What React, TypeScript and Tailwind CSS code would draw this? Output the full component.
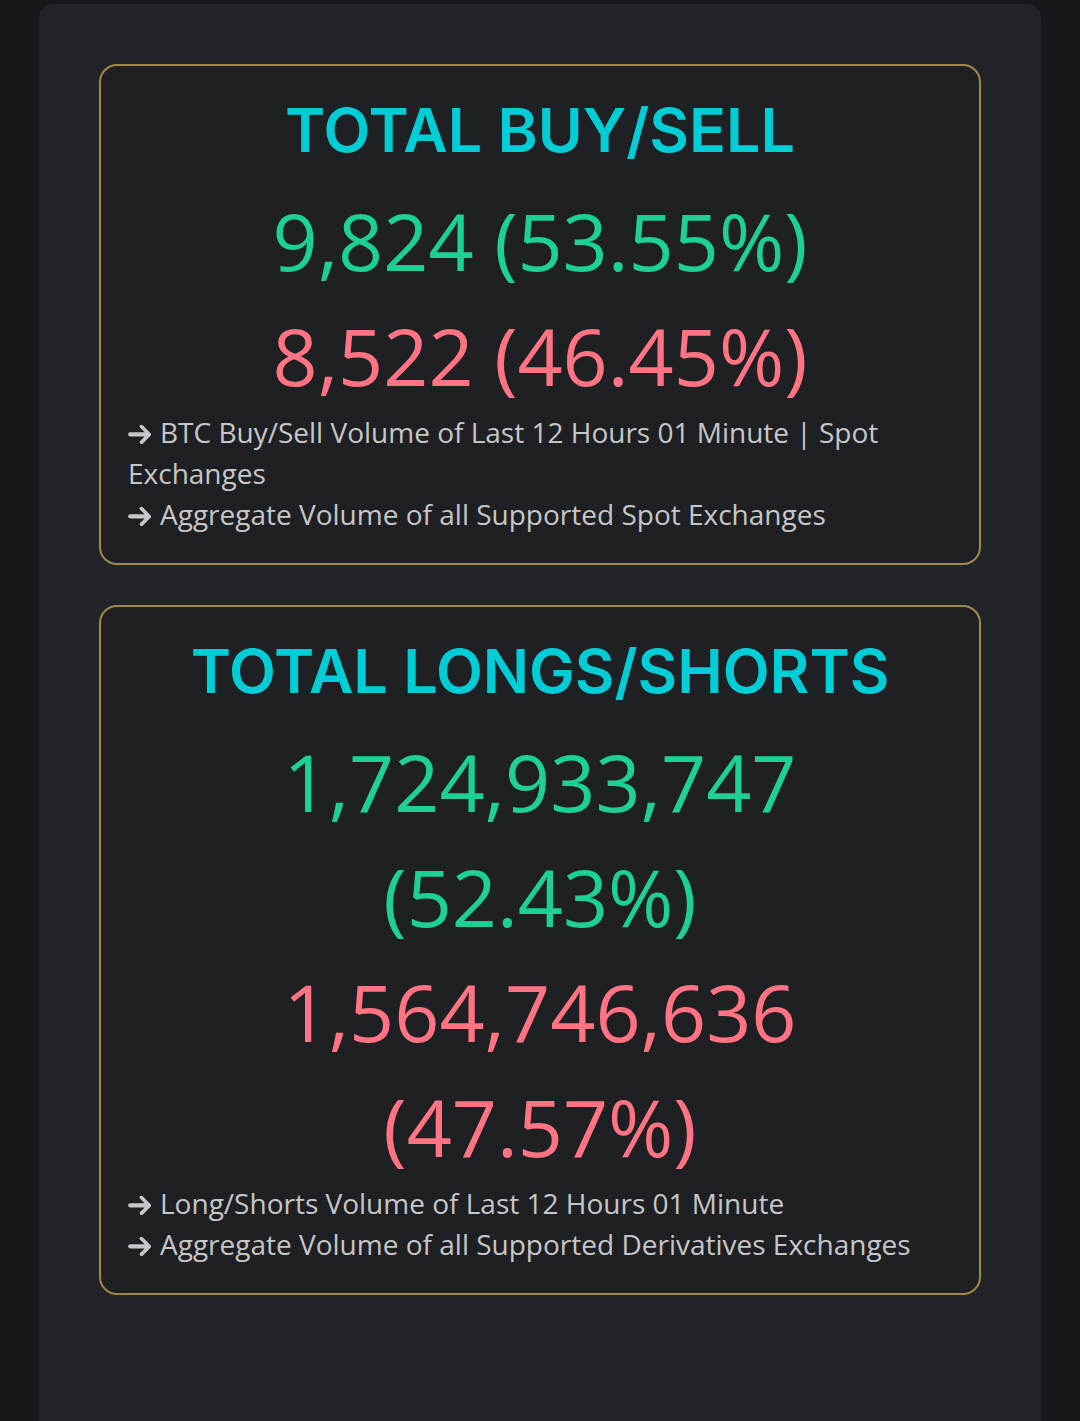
import React from 'react'

interface StatCardProps {
  title: string
  buy: string[]
  sell: string[]
  notes: string[]
}

// thick solid arrow, like the old font-awesome arrow-right
const Arrow = () => (
  <svg viewBox="0 0 24 22" className="inline-block w-[23px] h-[21px] align-[-2px] mr-[9px]" fill="currentColor">
    <path d="M12.6 1.4a2 2 0 0 1 2.8 0l8.2 8.2a2 2 0 0 1 0 2.8l-8.2 8.2a2 2 0 0 1-2.8-2.8l4.8-4.8H2.2a2.2 2.2 0 0 1 0-4.4h15.2l-4.8-4.8a2 2 0 0 1 0-2.8z" />
  </svg>
)

const StatCard: React.FC<StatCardProps> = ({ title, buy, sell, notes }) => {
  return (
    <section className="rounded-[18px] border-2 border-[#9f8848] bg-[#1f2024] px-[27px] pt-[26px] pb-[28px]">
      <h2 className="text-center text-[61px] leading-[76px] font-semibold text-[#00cdd6] font-['Inter',sans-serif]">
        {title}
      </h2>

      <div className="mt-[15px] text-center font-['Open_Sans',sans-serif] text-[79px] leading-[115px]">
        {buy.map(line => (
          <div key={line} className="text-[#1dd096]">{line}</div>
        ))}
        {sell.map(line => (
          <div key={line} className="text-[#ff7383]">{line}</div>
        ))}
      </div>

      <div className="-mt-[1px] font-['Open_Sans',sans-serif] text-[28px] leading-[41px] text-[#c6c6c6]">
        {notes.map(note => (
          <p key={note}>
            <Arrow />
            {note}
          </p>
        ))}
      </div>
    </section>
  )
}

export default function App() {
  return (
    <div className="min-h-[1421px] bg-[#17181b] px-[39px] pt-[4px]">
      <main className="min-h-[1417px] rounded-t-[14px] bg-[#212428] px-[60px] pt-[60px] pb-[80px] flex flex-col gap-[40px]">
        <StatCard
          title="TOTAL BUY/SELL"
          buy={['9,824 (53.55%)']}
          sell={['8,522 (46.45%)']}
          notes={[
            'BTC Buy/Sell Volume of Last 12 Hours 01 Minute | Spot Exchanges',
            'Aggregate Volume of all Supported Spot Exchanges',
          ]}
        />
        <StatCard
          title="TOTAL LONGS/SHORTS"
          buy={['1,724,933,747', '(52.43%)']}
          sell={['1,564,746,636', '(47.57%)']}
          notes={[
            'Long/Shorts Volume of Last 12 Hours 01 Minute',
            'Aggregate Volume of all Supported Derivatives Exchanges',
          ]}
        />
      </main>
    </div>
  )
}
